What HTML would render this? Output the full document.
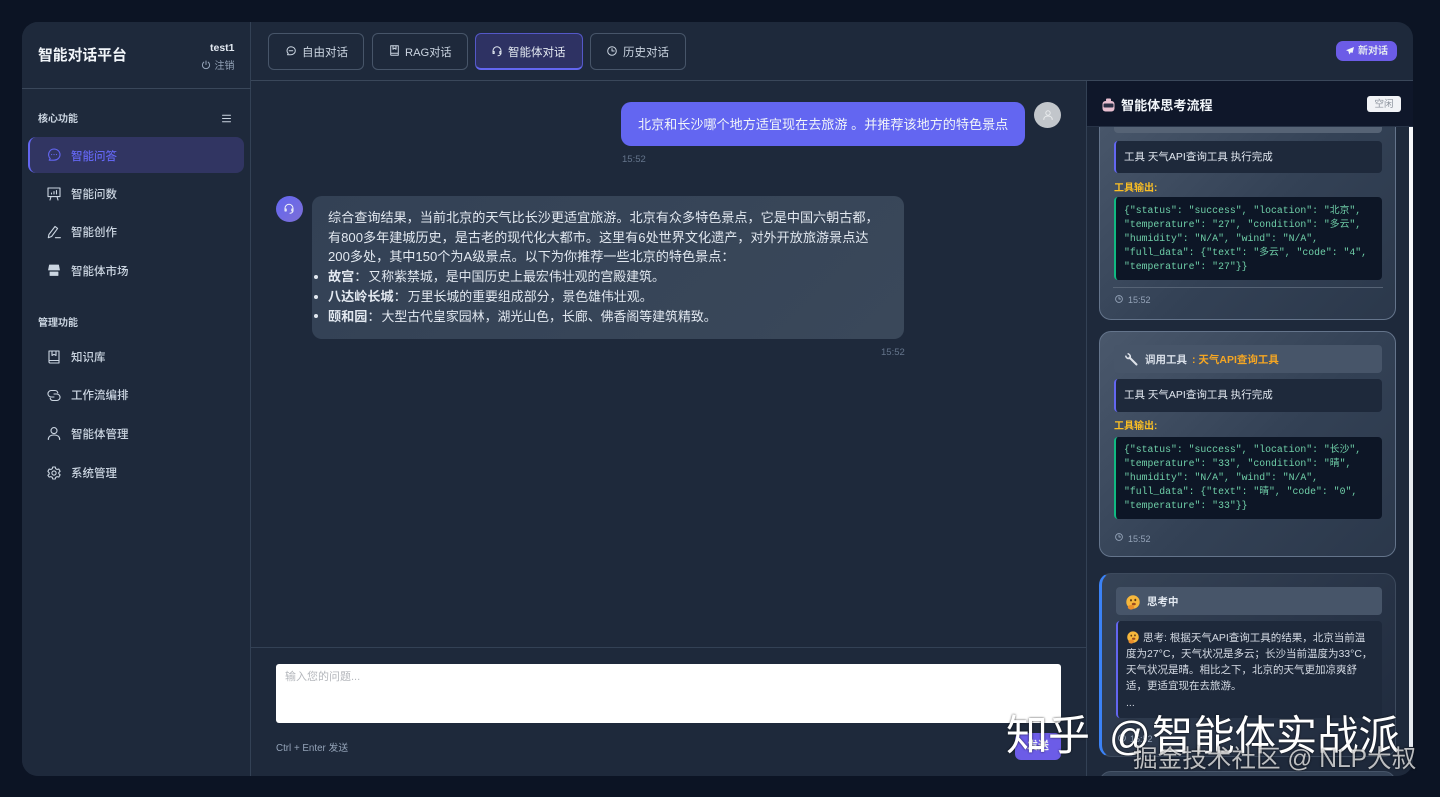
<!DOCTYPE html>
<html lang="zh-CN"><head><meta charset="utf-8"><title>智能对话平台</title>
<style>
*{box-sizing:border-box;margin:0;padding:0}
html,body{width:1440px;height:797px;overflow:hidden;background:#0c1424}
body{font-family:"Liberation Sans","Noto Sans CJK SC",sans-serif;position:relative;color:#e2e8f0}
.a{position:absolute;white-space:nowrap}
svg{position:absolute;fill:none;stroke:currentColor;stroke-width:1.5;stroke-linecap:round;stroke-linejoin:round}
#app{position:absolute;left:22px;top:22px;width:1391px;height:754px;background:#1e293b;border-radius:16px;overflow:hidden}
#stage{position:absolute;left:0;top:0;width:1440px;height:797px}
.nav{font-size:11.5px;line-height:16px;color:#cbd5e1;left:71px;font-weight:500}
.ico{color:#cbd5e1}
.sec{font-size:10px;line-height:14px;left:38px;color:#cbd5e1;font-weight:700}
.tab{position:absolute;top:33px;height:37px;border:1px solid #475569;border-radius:6px;background:#1e293b}
.tabt{font-size:11.5px;line-height:16px;top:45px;color:#cbd5e1}
.card{position:absolute;left:1099px;width:297px;border:1px solid #64748b;border-radius:12px;background:linear-gradient(135deg,#4a586c 0%,#334155 55%,#2b384b 100%)}
.head{position:absolute;left:1114px;width:268px;background:#475569;border-radius:4px}
.box{position:absolute;left:1114px;width:268px;background:#1e293b;border-left:2px solid #6366f1;border-radius:4px}
.boxt{font-size:10.5px;line-height:14px;left:1124px;color:#e2e8f0}
.lbl{font-size:10px;line-height:14px;left:1114px;color:#fbbf24;font-weight:700}
.code{position:absolute;left:1114px;width:268px;background:#0d1626;border-left:2px solid #10b981;border-radius:4px}
.codet{position:absolute;left:1124px;font:9.8px/13.9px "Liberation Mono","Noto Sans CJK SC",monospace;color:#6fcfa8;white-space:pre}
.time{font-size:9px;line-height:12px;left:1128px;color:#94a3b8}
.msg{font-size:13.12px;line-height:19.7px;color:#e2e8f0}
.msg i{font-style:normal;font-size:12.9px;margin-left:1px}
.wm{text-shadow:0 0 2px rgba(0,0,0,.75)}
</style></head><body>
<div id="app"></div>
<div id="stage">
<!-- sidebar -->
<div class="a" style="left:22px;top:22px;width:229px;height:754px;background:#1e293b;border-right:1px solid #334155;border-radius:16px 0 0 16px"></div>
<div class="a" style="left:22px;top:88px;width:229px;height:1px;background:#3a475a"></div>
<div class="a" style="left:38px;top:46px;font-size:14.8px;line-height:20px;font-weight:700;color:#f1f5f9">智能对话平台</div>
<div class="a" style="left:210px;top:41px;font-size:10.5px;line-height:14px;font-weight:700;color:#e2e8f0">test1</div>
<svg style="left:201px;top:60px;color:#94a3b8;stroke-width:1" width="10" height="10" viewBox="0 0 10 10"><path d="M5 1v3.5M2.8 2.2a3.6 3.6 0 1 0 4.4 0"/></svg>
<div class="a" style="left:214.5px;top:60px;font-size:10px;line-height:14px;color:#94a3b8">注销</div>
<div class="a sec" style="top:113px">核心功能</div>
<svg style="left:222px;top:114px;color:#cbd5e1;stroke-width:1" width="9" height="9" viewBox="0 0 9 9"><path d="M.5 1.2h8M.5 4.5h8M.5 7.8h8"/></svg>
<div class="a" style="left:28px;top:137px;width:216px;height:36px;background:#313562;border-left:2px solid #6366f1;border-radius:8px"></div>
<svg style="left:47px;top:148px;color:#6366f1;stroke-width:1.1" width="14" height="14" viewBox="0 0 14 14"><path d="M7 1a6 5.6 0 0 1 0 11.2H2.2l1-1.7A5.6 5.6 0 0 1 7 1z"/><path d="M4.6 6.6h.1M7 6.6h.1M9.4 6.6h.1"/></svg>
<div class="a nav" style="top:148.500px;color:#6366f1">智能问答</div>
<svg class="ico" style="left:47px;top:187px;stroke-width:1.1" width="14" height="14" viewBox="0 0 14 14"><path d="M1 1h12v8.6H1zM4 9.6l-1 3.4M10 9.6l1 3.4M4.5 7V6M7 7V4.5M9.5 7V3.5"/></svg>
<div class="a nav" style="top:187px">智能问数</div>
<svg class="ico" style="left:47px;top:225px;stroke-width:1.1" width="14" height="14" viewBox="0 0 14 14"><path d="M1.3 12.7l.6-3.200L8 1.500l2.600 1.900-6 8.100zM8.400 12.700h5"/></svg>
<div class="a nav" style="top:225px">智能创作</div>
<svg class="ico" style="left:48px;top:264px;fill:currentColor;stroke-width:.8" width="12" height="13" viewBox="0 0 12 13"><path d="M1.500 1h9l1 5h-11zM2 8h8v3.500H2z"/></svg>
<div class="a nav" style="top:264px">智能体市场</div>
<div class="a sec" style="top:317px">管理功能</div>
<svg class="ico" style="left:48px;top:350px;stroke-width:1.1" width="12" height="14" viewBox="0 0 12 14"><path d="M1 1h10v12H2.200A1.200 1.200 0 0 1 1 11.800zM1 10.500h10M4 1v4.500l2-1.200 2 1.200V1"/></svg>
<div class="a nav" style="top:350px">知识库</div>
<svg class="ico" style="left:47px;top:389px;stroke-width:1.1" width="14" height="13" viewBox="0 0 14 13"><path d="M7 8H4.200a3.200 3.200 0 0 1 0-6.500H8a3 3 0 0 1 2.800 2.300"/><path d="M7 5h2.800a3.200 3.200 0 0 1 0 6.500H6a3 3 0 0 1-2.800-2.300"/></svg>
<div class="a nav" style="top:388px">工作流编排</div>
<svg class="ico" style="left:47px;top:427px;stroke-width:1.1" width="14" height="13" viewBox="0 0 14 13"><circle cx="7" cy="3.600" r="3"/><path d="M1.300 12.500c0-3 2.500-4.500 5.700-4.500s5.700 1.500 5.700 4.500"/></svg>
<div class="a nav" style="top:427px">智能体管理</div>
<svg class="ico" style="left:47px;top:466px;stroke-width:1.1" width="14" height="14" viewBox="0 0 14 14"><circle cx="7" cy="7" r="2.100"/><path d="M5.700 1h2.600l.4 1.700 1.400.8 1.700-.5 1.300 2.300-1.300 1.200v1.100l1.300 1.200-1.300 2.300-1.700-.5-1.400.8-.4 1.600H5.700l-.4-1.600-1.400-.8-1.700.5L.9 9.300l1.300-1.200V7L.9 5.300l1.300-2.300 1.700.5 1.400-.8z"/></svg>
<div class="a nav" style="top:466px">系统管理</div>

<!-- top bar -->
<div class="a" style="left:251px;top:80px;width:1162px;height:1px;background:#3a475a"></div>
<div class="tab" style="left:268px;width:96px"></div>
<svg style="left:286px;top:46px;color:#cbd5e1;stroke-width:1" width="10" height="10" viewBox="0 0 10 10"><path d="M5 .7a4.300 4 0 0 1 0 8H1.500l.7-1.200A4 4 0 0 1 5 .7zM3.200 4.800h3.600"/></svg>
<div class="a tabt" style="left:302px">自由对话</div>
<div class="tab" style="left:372px;width:96px"></div>
<svg style="left:390px;top:45px;color:#cbd5e1;stroke-width:1" width="9" height="11" viewBox="0 0 9 11"><path d="M.7.7h7.600v9.600H1.500a.8.8 0 0 1-.8-.8zM.7 8.200h7.600M3 .7v3.500l1.500-1 1.500 1V.7"/></svg>
<div class="a tabt" style="left:405px;font-size:11.200px">RAG对话</div>
<div class="tab" style="left:475px;width:108px;background:#2e3263;border-color:#5458c8;border-bottom:2px solid #6366f1"></div>
<svg style="left:492px;top:46px;color:#e2e8f0;stroke-width:1" width="10" height="11" viewBox="0 0 10 11"><path d="M1 6.500V4.800a4 4 0 0 1 8 0v1.700M9 7c0 1.500-1.200 2.700-3 2.700"/><path d="M1 5.500h1.200v2H1zM7.800 5.500H9v2H7.800z"/></svg>
<div class="a tabt" style="left:508px;color:#e2e8f0">智能体对话</div>
<div class="tab" style="left:590px;width:96px"></div>
<svg style="left:607px;top:46px;color:#cbd5e1;stroke-width:1" width="10" height="10" viewBox="0 0 10 10"><circle cx="5" cy="5" r="4.300"/><path d="M5 2.600V5h2.200"/></svg>
<div class="a tabt" style="left:623px">历史对话</div>
<div class="a" style="left:1336px;top:41px;width:61px;height:20px;background:#6c5ce7;border-radius:7px"></div>
<svg style="left:1346px;top:47px;color:#f1f5f9;fill:currentColor;stroke:none" width="8" height="8" viewBox="0 0 8 8"><path d="M8 0L0 3.200l2.400 1.100L3.300 7.500 4.800 5.200 6.500 6z"/></svg>
<div class="a" style="left:1358px;top:45px;font-size:10px;line-height:14px;font-weight:700;color:#e2e8f0">新对话</div>

<!-- chat -->
<div class="a" style="left:621px;top:102px;width:404px;height:44px;background:#6366f1;border-radius:10px"></div>
<div class="a" style="left:638px;top:114.500px;font-size:13.100px;line-height:20px;color:#f1f5f9">北京和长沙哪个地方适宜现在去旅游 。并推荐该地方的特色景点</div>
<div class="a" style="left:622px;top:153.500px;font-size:9.500px;line-height:12px;color:#64748b">15:52</div>
<div class="a" style="left:1034px;top:102px;width:27px;height:26px;background:#c2c6cb;border-radius:50%"></div>
<svg style="left:1043px;top:110px;color:#e8eaec;stroke-width:1" width="10" height="10" viewBox="0 0 10 10"><circle cx="5" cy="3" r="2.200"/><path d="M.8 9.500c0-2.300 1.800-3.500 4.200-3.500s4.200 1.200 4.200 3.500"/></svg>

<div class="a" style="left:276px;top:196px;width:27px;height:26px;background:linear-gradient(135deg,#6366f1,#7c6fd6);border-radius:50%"></div>
<svg style="left:284px;top:203px;color:#f1f5f9;stroke-width:1" width="10" height="12" viewBox="0 0 10 11"><path d="M1 6.500V4.800a4 4 0 0 1 8 0v1.700M9 7c0 1.500-1.200 2.700-3 2.700"/><path d="M1 5.500h1.200v2H1zM7.800 5.500H9v2H7.800z"/></svg>
<div class="a" style="left:312px;top:196px;width:592px;height:143px;background:linear-gradient(135deg,#334155,#3a485a);border-radius:10px"></div>
<div class="a msg" style="left:328px;top:208px">综合查询结果，当前北京的天气比长沙更适宜旅游。北京有众多特色景点，它是中国六朝古都，<br>有800多年建城历史，是古老的现代化大都市。这里有6处世界文化遗产，对外开放旅游景点达<br>200多处，其中150个为A级景点。以下为你推荐一些北京的特色景点：<br><b>故宫</b>：<i>又称紫禁城，是中国历史上最宏伟壮观的宫殿建筑。</i><br><b>八达岭长城</b>：<i>万里长城的重要组成部分，景色雄伟壮观。</i><br><b>颐和园</b>：<i>大型古代皇家园林，湖光山色，长廊、佛香阁等建筑精致。</i></div>
<div class="a" style="left:314px;top:275.300px;width:4px;height:4px;background:#e2e8f0;border-radius:50%"></div>
<div class="a" style="left:314px;top:295.300px;width:4px;height:4px;background:#e2e8f0;border-radius:50%"></div>
<div class="a" style="left:314px;top:314px;width:4px;height:4px;background:#e2e8f0;border-radius:50%"></div>
<div class="a" style="left:881px;top:346.500px;font-size:9.500px;line-height:12px;color:#64748b">15:52</div>

<!-- input -->
<div class="a" style="left:251px;top:647px;width:835px;height:1px;background:#334155"></div>
<div class="a" style="left:276px;top:664px;width:785px;height:59px;background:#fff;border-radius:3px"></div>
<div class="a" style="left:285px;top:669.500px;font-size:11px;line-height:15px;color:#b4b7bc">输入您的问题...</div>
<div class="a" style="left:276px;top:741.500px;font-size:9.800px;line-height:14px;color:#94a3b8">Ctrl + Enter 发送</div>
<div class="a" style="left:1015px;top:733px;width:46px;height:27px;background:#6c5ce7;border-radius:6px"></div>
<div class="a" style="left:1027px;top:739px;font-size:11px;line-height:14px;font-weight:700;color:#f1f5f9">发送</div>

<!-- right panel -->
<div class="a" style="left:1086px;top:81px;width:327px;height:695px;background:#1e293b;border-left:1px solid #334155;overflow:hidden;border-radius:0 0 16px 0"></div>
<div class="a" style="left:1409px;top:127px;width:4px;height:323px;background:#f6f7f9"></div>
<div class="a" style="left:1409px;top:450px;width:4px;height:297px;background:#e6e9ef"></div>

<div class="card" style="top:100px;height:220px"></div>
<div class="head" style="top:110px;height:23px;background:#566375"></div>
<div class="box" style="top:141px;height:32px"></div>
<div class="a boxt" style="top:150px">工具 天气API查询工具 执行完成</div>
<div class="a lbl" style="top:181.500px">工具输出:</div>
<div class="code" style="top:197px;height:83px"></div>
<div class="codet" style="top:204px">{"status": "success", "location": "北京",
"temperature": "27", "condition": "多云",
"humidity": "N/A", "wind": "N/A",
"full_data": {"text": "多云", "code": "4",
"temperature": "27"}}</div>
<div class="a" style="left:1113px;top:287px;width:270px;height:1px;background:#566375"></div>
<svg style="left:1115px;top:295px;color:#94a3b8;stroke-width:.9" width="8" height="8" viewBox="0 0 8 8"><circle cx="4" cy="4" r="3.400"/><path d="M4 2v2h1.600"/></svg>
<div class="a time" style="top:294px">15:52</div>

<div class="card" style="top:331px;height:226px"></div>
<div class="head" style="top:345px;height:28px"></div>
<svg style="left:1125px;top:353px;color:#dfe3ea;stroke-width:2" width="13" height="13" viewBox="0 0 13 13"><path d="M4.500 4.500L11.500 11.500"/><path d="M.8 3.200A3 3 0 0 0 4.800 5.300 3 3 0 0 0 3.200.8" stroke-width="1.500"/></svg>
<div class="a" style="left:1145px;top:352.500px;font-size:10.500px;line-height:14px;font-weight:700;color:#d8dee7">调用工具</div>
<div class="a" style="left:1192px;top:352.500px;font-size:10.500px;line-height:14px;font-weight:700;color:#f5a623">: 天气API查询工具</div>
<div class="box" style="top:379px;height:33px"></div>
<div class="a boxt" style="top:388px">工具 天气API查询工具 执行完成</div>
<div class="a lbl" style="top:420px">工具输出:</div>
<div class="code" style="top:437px;height:82px"></div>
<div class="codet" style="top:443px">{"status": "success", "location": "长沙",
"temperature": "33", "condition": "晴",
"humidity": "N/A", "wind": "N/A",
"full_data": {"text": "晴", "code": "0",
"temperature": "33"}}</div>
<svg style="left:1115px;top:533px;color:#94a3b8;stroke-width:.9" width="8" height="8" viewBox="0 0 8 8"><circle cx="4" cy="4" r="3.400"/><path d="M4 2v2h1.600"/></svg>
<div class="a time" style="top:533px">15:52</div>

<div class="card" style="top:573px;height:184px;background:linear-gradient(135deg,#364356,#1f2a3d);border-color:#3d4a5d;border-left:3px solid #3b82f6"></div>
<div class="head" style="left:1116px;width:266px;top:587px;height:28px"></div>
<svg style="left:1126px;top:595px;stroke:none" width="14" height="15" viewBox="0 0 14 15"><circle cx="7" cy="7" r="6.700" fill="#f6b73c"/><ellipse cx="5" cy="5.300" rx="1" ry="1.200" fill="#5c3a12"/><ellipse cx="9.300" cy="5" rx="1" ry="1.200" fill="#5c3a12"/><ellipse cx="7.800" cy="9" rx="2" ry="1.300" fill="#9a4a20"/><ellipse cx="5" cy="12.300" rx="3.200" ry="2.300" fill="#ea8f2c"/></svg>
<div class="a" style="left:1147px;top:595px;font-size:10.500px;line-height:14px;font-weight:700;color:#e2e8f0">思考中</div>
<div class="box" style="left:1116px;width:266px;top:621px;height:97px;background:#1e293b"></div>
<svg style="left:1127px;top:631px;stroke:none" width="12" height="13" viewBox="0 0 14 15"><circle cx="7" cy="7" r="6.700" fill="#f6b73c"/><ellipse cx="5" cy="5.300" rx="1" ry="1.200" fill="#5c3a12"/><ellipse cx="9.300" cy="5" rx="1" ry="1.200" fill="#5c3a12"/><ellipse cx="7.800" cy="9" rx="2" ry="1.300" fill="#9a4a20"/><ellipse cx="5" cy="12.300" rx="3.200" ry="2.300" fill="#ea8f2c"/></svg>
<div class="a" style="left:1126px;top:629.500px;font-size:10.500px;line-height:16.300px;color:#d6dce5"><span style="display:inline-block;width:17px"></span>思考: 根据天气API查询工具的结果，北京当前温<br>度为27°C，天气状况是多云；长沙当前温度为33°C，<br>天气状况是晴。相比之下，北京的天气更加凉爽舒<br>适，更适宜现在去旅游。<br>...</div>
<svg style="left:1118px;top:734px;color:#94a3b8;stroke-width:.9" width="8" height="8" viewBox="0 0 8 8"><circle cx="4" cy="4" r="3.400"/><path d="M4 2v2h1.600"/></svg>
<div class="a time" style="left:1130px;top:733px">15:52</div>
<div class="card" style="top:771px;height:30px;background:#334155;border-color:#475569"></div>

<!-- cover below the app so the overflowing card is clipped -->
<div class="a" style="left:1086px;top:776px;width:354px;height:21px;background:#0c1424"></div>
<!-- panel header -->
<div class="a" style="left:1087px;top:81px;width:326px;height:46px;background:#0f172a;border-bottom:1px solid #273347"></div>
<svg style="left:1102px;top:98px;stroke:none" width="13" height="14" viewBox="0 0 13 14"><rect x="0.500" y="3" width="12" height="10.500" rx="3" fill="#e8bfd0"/><rect x="4" y="0.500" width="5" height="3" rx="1" fill="#e8bfd0"/><rect x="1.500" y="5.500" width="10" height="4" rx="1" fill="#2b2f45"/></svg>
<div class="a" style="left:1121px;top:97px;font-size:13.100px;line-height:18px;font-weight:700;color:#f1f5f9">智能体思考流程</div>
<div class="a" style="left:1367px;top:96px;width:34px;height:16px;background:#f1f3f6;border-radius:3px;text-align:center;font-size:9.500px;line-height:17px;color:#8b929c">空闲</div>

<!-- watermarks -->
<div class="a wm" style="left:1006px;top:711px;font-size:42px;line-height:50px;color:#fff">知乎</div>
<div class="a wm" style="left:1109px;top:711px;font-size:41px;line-height:50px;color:#fff">@</div>
<div class="a wm" style="left:1152px;top:711px;font-size:41.300px;line-height:50px;color:#fff">智能体实战派</div>
<div class="a wm" style="left:1133px;top:745px;font-size:24.600px;line-height:30px;color:rgba(255,255,255,.72)">掘金技术社区 @ NLP大叔</div>
</div>
</body></html>
